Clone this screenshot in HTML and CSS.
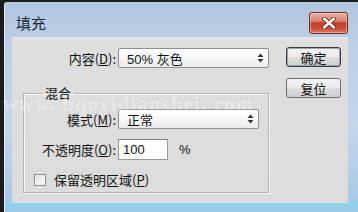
FILE: index.html
```
<!DOCTYPE html>
<html>
<head>
<meta charset="utf-8">
<link rel="stylesheet" href="styles.css">
</head>
<body>
<div class="window">
  <div class="titlebar">
    <span class="title">填充</span>
    <span class="close"><svg width="16" height="12" viewBox="0 0 16 12"><path d="M3 1.5 L13 10.5 M13 1.5 L3 10.5" stroke="#5a2018" stroke-width="4" stroke-linecap="round"/><path d="M3 1.5 L13 10.5 M13 1.5 L3 10.5" stroke="#ffffff" stroke-width="2.4" stroke-linecap="round"/></svg></span>
  </div>
  <div class="client">
    <div class="main">
      <div class="row row-top">
        <label class="lbl lbl-wide">内容(<u>D</u>):</label>
        <div class="select select-wide"><span>50% 灰色</span><svg class="arrows" width="7" height="10" viewBox="0 0 7 10"><path d="M3.5 0.5 L6.5 4 L0.5 4 Z M3.5 9.5 L6.5 6 L0.5 6 Z" fill="#333"/></svg></div>
      </div>
      <fieldset class="group">
        <legend class="legend">混合</legend>
        <div class="row row-mode">
          <label class="lbl">模式(<u>M</u>):</label>
          <div class="select select-mode"><span>正常</span><svg class="arrows" width="7" height="10" viewBox="0 0 7 10"><path d="M3.5 0.5 L6.5 4 L0.5 4 Z M3.5 9.5 L6.5 6 L0.5 6 Z" fill="#333"/></svg></div>
        </div>
        <div class="row row-op">
          <label class="lbl">不透明度(<u>O</u>):</label>
          <div class="input">100</div>
          <span class="pct">%</span>
        </div>
        <div class="row row-check">
          <span class="checkbox"></span>
          <span class="check-lbl">保留透明区域(<u>P</u>)</span>
        </div>
      </fieldset>
    </div>
    <div class="side">
      <div class="btn btn-default">确定</div>
      <div class="btn">复位</div>
    </div>
    <div class="watermark">www. bqoyidianshei. com</div>
  </div>
</div>
</body>
</html>
```
FILE: styles.css
```
html, body {
  margin: 0;
  padding: 0;
}
body {
  width: 358px;
  height: 212px;
  overflow: hidden;
  background: #1c1c1c;
  font-family: "Liberation Sans", "Noto Sans CJK SC", sans-serif;
  font-size: 13px;
  color: #111;
}
.window {
  margin: 2px 0 0 4px;
  width: 354px;
  height: 210px;
  box-sizing: border-box;
  background: linear-gradient(180deg, #b2c5de 0%, #bccfe6 20%, #c4d5ea 60%, #a9c9e6 94%, #8ad6ee 96%, #9ec6e6 100%);
  border-left: 1px solid #dfe9f5;
  display: flex;
  flex-direction: column;
  border-top-left-radius: 3px;
}
.titlebar {
  height: 35px;
  display: flex;
  align-items: flex-start;
  padding-left: 11px;
  box-sizing: border-box;
}
.title {
  margin-top: 11px;
  font-family: "Noto Sans CJK SC", sans-serif;
  font-size: 15px;
  line-height: 20px;
  color: #1b2838;
}
.close {
  margin-left: auto;
  margin-right: 10px;
  margin-top: 10px;
  width: 39px;
  height: 22px;
  box-sizing: border-box;
  border: 1px solid #6b2e24;
  border-radius: 3px;
  background: linear-gradient(180deg, #e9b3a6 0%, #d9826f 40%, #c2402c 50%, #c74b34 75%, #da7a62 100%);
  box-shadow: inset 0 0 0 1px rgba(255,220,210,0.5);
  display: flex;
  align-items: center;
  justify-content: center;
}
.client {
  position: relative;
  margin-left: 7px;
  width: 336px;
  height: 166px;
  background: linear-gradient(180deg, #e8e8e8 0px, #dedede 4px, #dcdcdc 100%);
  display: flex;
  padding-top: 10px;
  box-sizing: border-box;
}
.main {
  width: 262px;
}
.row {
  display: flex;
  align-items: center;
}
.row-top {
  margin-top: 1px;
  height: 20px;
}
.lbl {
  width: 92px;
  margin-right: 2px;
  text-align: right;
  font-family: "Noto Sans CJK SC", sans-serif;
  font-size: 13px;
  white-space: nowrap;
}
.lbl-wide {
  width: 104px;
}
.select {
  height: 20px;
  box-sizing: border-box;
  border: 1px solid #8f9090;
  border-radius: 2px;
  background: linear-gradient(180deg, #ffffff 0%, #f7f7f7 50%, #ececec 100%);
  display: flex;
  align-items: center;
  padding-left: 8px;
  padding-right: 4px;
  font-family: "Liberation Sans", "Noto Sans CJK SC", sans-serif;
}
.select span {
  flex: 1;
}
.select-wide {
  width: 151px;
}
.select-mode {
  width: 141px;
}
.group {
  margin: 17px 0 0 11px;
  padding: 0 0 5px 0;
  width: 246px;
  box-sizing: border-box;
  border: 1px solid #b4b4b4;
  box-shadow: 1px 1px 0 #f8f8f8, inset 1px 1px 0 #f8f8f8;
  min-width: 0;
}
.legend {
  margin-left: 18px;
  padding: 0 3px;
  font-family: "Noto Sans CJK SC", sans-serif;
  font-size: 13px;
  line-height: 16px;
}
.row-mode {
  margin-top: 8px;
  height: 20px;
}
.row-op {
  margin-top: 10px;
  height: 21px;
}
.input {
  width: 50px;
  height: 21px;
  box-sizing: border-box;
  border: 1px solid #9a9a9a;
  border-top-color: #7a7a7a;
  background: #fff;
  padding-left: 4px;
  line-height: 19px;
}
.pct {
  margin-left: 11px;
  font-size: 13px;
}
.row-check {
  margin-top: 12px;
  height: 15px;
  padding-left: 10px;
}
.checkbox {
  width: 12px;
  height: 12px;
  box-sizing: border-box;
  border: 1px solid #8e8f8f;
  background: linear-gradient(135deg, #dcdcdc 0%, #f4f4f4 60%, #ffffff 100%);
  box-shadow: inset 0 0 0 1px #f0f0f0;
}
.check-lbl {
  margin-left: 8px;
  font-family: "Noto Sans CJK SC", sans-serif;
  font-size: 13px;
}
.side {
  margin-left: 12px;
  display: flex;
  flex-direction: column;
  gap: 11px;
}
.btn {
  width: 55px;
  height: 20px;
  box-sizing: border-box;
  border: 1px solid #707070;
  border-radius: 3px;
  background: linear-gradient(180deg, #f3f3f3 0%, #ebebeb 48%, #dddddd 52%, #cfcfcf 100%);
  display: flex;
  align-items: center;
  justify-content: center;
  font-family: "Noto Sans CJK SC", sans-serif;
  font-size: 13px;
}
.btn-default {
  border-color: #3c3c3c;
  box-shadow: inset 0 0 0 1px #9aa6b0;
}
.watermark {
  position: absolute;
  left: -9px;
  top: 56px;
  font-family: "Liberation Serif", serif;
  font-weight: bold;
  font-size: 20px;
  line-height: 22px;
  letter-spacing: 1.5px;
  color: #ffffff;
  opacity: 0.3;
  white-space: nowrap;
  pointer-events: none;
}
```
